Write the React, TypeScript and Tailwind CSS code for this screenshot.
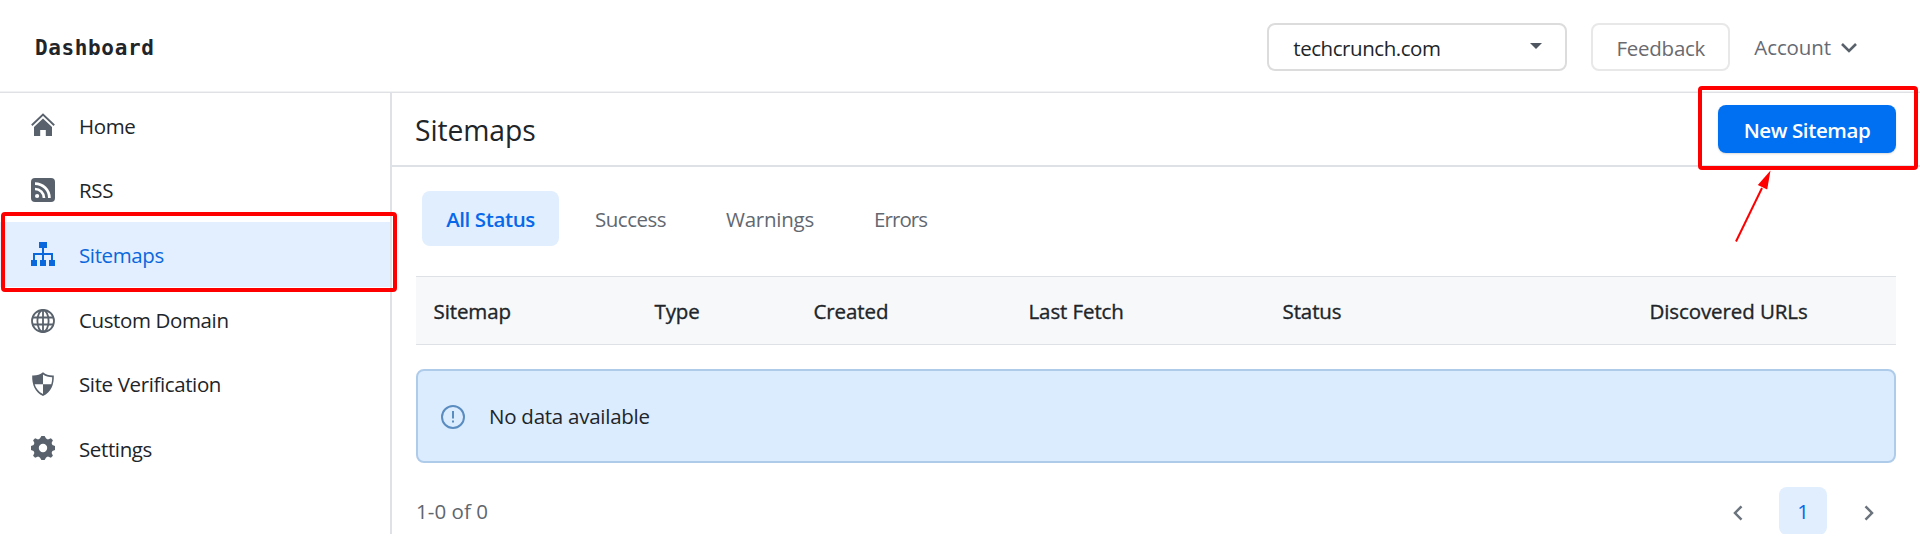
import type { ReactNode } from "react";

function Svg({ children, className = "" }: { children: ReactNode; className?: string }) {
  return (
    <svg viewBox="0 0 24 24" className={"size-6 shrink-0 fill-current " + className}>
      {children}
    </svg>
  );
}

const HomeIcon = () => (
  <Svg>
    <path d="M0.8 12.2 12 1.6 23.2 12.2" fill="none" stroke="currentColor" strokeWidth="1.9" />
    <path d="M12 5.5 21 14v9h-6.2v-6H9.2v6H3v-9z" />
  </Svg>
);

const RssIcon = () => (
  <Svg>
    <rect width="24" height="24" rx="4" />
    <circle cx="6.1" cy="18" r="2.1" fill="#fff" />
    <path d="M4 11a9 9 0 0 1 9 9M4 5.6A14.4 14.4 0 0 1 18.4 20" fill="none" stroke="#fff" strokeWidth="2.7" />
  </Svg>
);

const SitemapIcon = () => (
  <Svg>
    <path d="M8 0h8v6h-3v5h9v7h2v6h-6v-6h2v-5h-7v5h2v6H9v-6h2v-5H4v5h2v6H0v-6h2v-7h9V6H8z" />
  </Svg>
);

const GlobeIcon = () => (
  <Svg className="mt-[3px]">
    <g fill="none" stroke="currentColor" strokeWidth="1.8">
      <circle cx="12" cy="12" r="11" />
      <ellipse cx="12" cy="12" rx="5.6" ry="11" />
      <path d="M12 1v22M2 8.5h20M1.500 15.500h21" />
    </g>
  </Svg>
);

const ShieldIcon = () => (
  <Svg className="mt-px">
    <path
      fillRule="evenodd"
      d="M12 0.2C9 2.6 5.600 3.600 1.200 3.400C0.800 12 4 20.500 12 24C20 20.500 23.200 12 22.800 3.400C18.400 3.600 15 2.600 12 0.200ZM12 2.400C14.600 4.200 17.600 5.100 21.200 5.200C21.300 7.700 21 10 20.300 12.200H12ZM12 12.200V22C7.600 19.800 4.900 16.300 3.700 12.200Z"
    />
  </Svg>
);

const GearIcon = () => (
  <Svg>
    <path
      fillRule="evenodd"
      d="M10.400 0h3.200l1.500 2.600 1.800.8 3-1.200 2 2-1.300 2.900.8 1.800L24 10v4l-2.600 1.100-.8 1.800 1.300 2.900-2 2-3-1.200-1.800.8L13.600 24h-3.200l-1.500-2.600-1.800-.8-3 1.200-2-2 1.300-2.900-.8-1.800L0 14v-4l2.600-1.100.8-1.800-1.300-2.900 2-2 3 1.200 1.800-.8zM12 7.800a4.200 4.200 0 1 0 0 8.400 4.200 4.200 0 0 0 0-8.400z"
    />
  </Svg>
);

const nav = [
  { label: "Home", icon: <HomeIcon /> },
  { label: "RSS", icon: <RssIcon /> },
  { label: "Sitemaps", icon: <SitemapIcon />, active: true },
  { label: "Custom Domain", icon: <GlobeIcon /> },
  { label: "Site Verification", icon: <ShieldIcon /> },
  { label: "Settings", icon: <GearIcon /> },
];

const tabs = [
  { label: "Success", className: "ml-9 tracking-[-0.5px]" },
  { label: "Warnings", className: "ml-[60px] tracking-[-0.25px]" },
  { label: "Errors", className: "ml-[60px] tracking-[-0.9px]" },
];

export default function App() {
  return (
    <div className="flex h-[534px] w-[1920px] flex-col overflow-hidden bg-white font-['Open_Sans','Noto_Sans',sans-serif] text-[20.5px] leading-7 tracking-[-0.25px] text-[#212529]">
      <header className="flex h-[93px] shrink-0 items-center border-b border-[#dfe1e4] pt-[2px] pr-[63px] pl-[35px] shadow-[inset_0_-1px_0_#f1f2f3]">
        <h1 className="mt-0.5 flex-1 font-['DejaVu_Sans_Mono',monospace] text-[21px] font-bold tracking-[0.63px]">Dashboard</h1>
        <button className="flex h-12 w-[300px] items-center justify-between rounded-lg border-2 border-[#dcdcdc] pt-0.5 pr-[23px] pl-6 tracking-[-0.45px]">
          techcrunch.com
          <svg viewBox="0 0 12 6" className="mb-1 h-1.5 w-3 fill-[#4f5660]">
            <path d="M0 0h12L6 6z" />
          </svg>
        </button>
        <button className="ml-6 flex h-12 w-[139px] items-center justify-center rounded-lg border-2 border-[#e8e8e8] pt-0.5 text-[#6a6a6f]">
          Feedback
        </button>
        <button className="ml-6 flex items-center gap-[10px] tracking-[-0.1px] text-[#666a73]">
          Account
          <svg viewBox="0 0 16 10" className="mt-0.5 h-2.5 w-4 fill-none stroke-[#59616b]" strokeWidth="2.6">
            <path d="M1 1l7 7 7-7" />
          </svg>
        </button>
      </header>

      <div className="flex min-h-0 flex-1">
        <aside className="relative w-[392px] shrink-0 border-r-2 border-[#dee2e6]">
          <nav>
            {nav.map((item) => (
              <a
                key={item.label}
                className={
                  "flex h-[64.6px] items-center gap-6 pl-[31px] tracking-[-0.38px] " +
                  (item.active ? "bg-[#e3effe] text-[#0a67dc]" : "text-[#59626c]")
                }
              >
                {item.icon}
                <span className={item.active ? "pt-px" : "pt-px text-[#212529]"}>{item.label}</span>
              </a>
            ))}
          </nav>
          <div className="absolute top-[119px] left-px h-20 w-[396px] rounded-[4px] border-4 border-[#ff0000]" />
        </aside>

        <main className="relative min-w-0 flex-1">
          <div className="flex h-[74px] items-center justify-between border-b-2 border-[#dee2e6] pr-6 pl-[23px]">
            <h2 className="pt-0.5 text-[28.3px] leading-9 tracking-[-0.1px]">Sitemaps</h2>
            <button className="h-12 w-[178px] rounded-lg bg-[#0070f3] pt-0.5 font-semibold tracking-[-0.4px] text-white shadow-[0_1px_2px_rgba(0,0,0,0.15)]">
              New Sitemap
            </button>
          </div>

          <div className="mt-6 flex h-[55px] items-center pl-[30px] text-[#626870]">
            <button className="h-[55px] w-[137px] rounded-lg bg-[#e1eefe] pt-px font-semibold tracking-[-0.4px] text-[#0768ea]">
              All Status
            </button>
            {tabs.map((tab) => (
              <button key={tab.label} className={"pt-px " + tab.className}>
                {tab.label}
              </button>
            ))}
          </div>

          <div className="mt-[30px] mr-6 ml-6 grid h-[69px] grid-cols-[221px_159px_215px_254px_367px_1fr] items-center border-y border-[#dee2e6] bg-[#f6f8fa] pt-px pl-[17.5px] font-medium tracking-[-0.1px] [-webkit-text-stroke:0.35px_#212529]">
            <span>Sitemap</span>
            <span>Type</span>
            <span>Created</span>
            <span>Last Fetch</span>
            <span>Status</span>
            <span>Discovered URLs</span>
          </div>

          <div className="mx-6 mt-6 flex h-[94px] items-center gap-6 rounded-lg border-2 border-[#afcbea] bg-[#dbecff] pl-[23px]">
            <Svg className="mt-0.5 text-[#5b8cc0]">
              <circle cx="12" cy="12" r="11" fill="none" stroke="currentColor" strokeWidth="2" />
              <path d="M11 6h2v7.500h-2zM11 15.500h2v2h-2z" />
            </Svg>
            <span>No data available</span>
          </div>

          <div className="mt-6 flex h-12 items-center pr-[23px] pl-6">
            <span className="flex-1 tracking-[0.05px] text-[#5f666e]">1-0 of 0</span>
            <svg viewBox="0 0 10 16" className="mt-1 h-4 w-2.5 fill-none stroke-[#6b737c]" strokeWidth="2.500">
              <path d="M8.500 1.300 2 8l6.500 6.700" />
            </svg>
            <span className="mr-[37px] ml-9 flex h-12 w-12 items-center justify-center rounded-lg bg-[#e1eefe] text-[#0768ea]">1</span>
            <svg viewBox="0 0 10 16" className="mt-1 mr-[23px] h-4 w-2.5 fill-none stroke-[#6b737c]" strokeWidth="2.500">
              <path d="M1.500 1.300 8 8l-6.500 6.700" />
            </svg>
          </div>

          <div className="absolute -top-[7px] right-0.5 h-[84px] w-[220px] rounded-[4px] border-4 border-[#ff0000]" />
          <svg viewBox="0 0 40 74" className="absolute top-[77px] right-[146px] h-[74px] w-10">
            <path d="M2 71.500 28 18" fill="none" stroke="#ff0000" strokeWidth="2" />
            <path d="M36.500 0.500 33.200 19.500 23.800 15z" fill="#ff0000" />
          </svg>
        </main>
      </div>
    </div>
  );
}
